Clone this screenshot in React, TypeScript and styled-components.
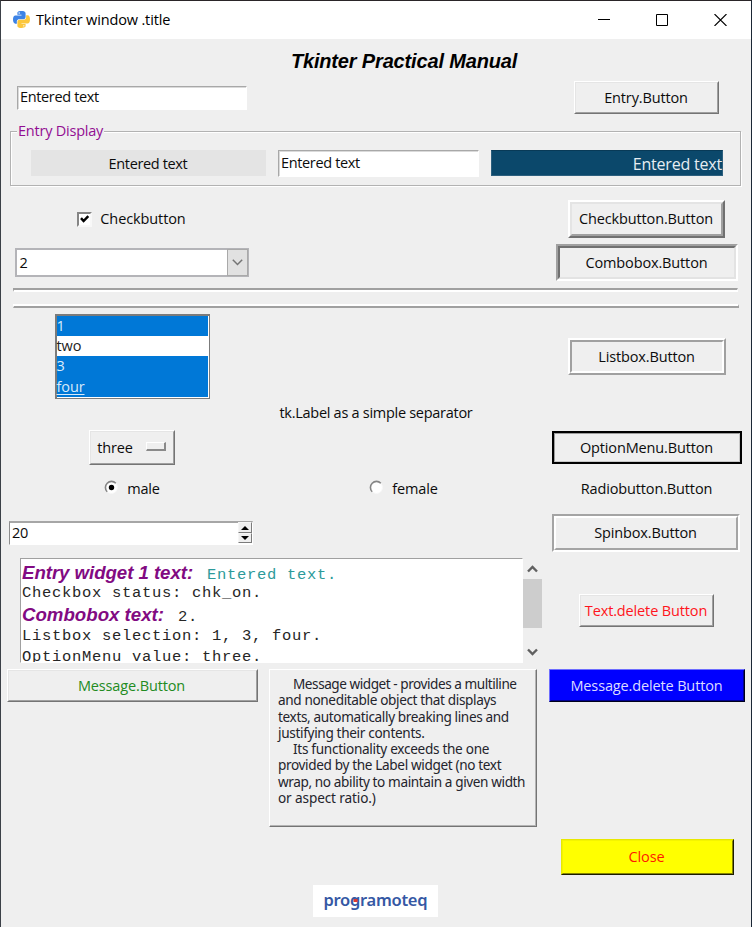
import React from 'react';
import styled, { createGlobalStyle, css } from 'styled-components';

const GlobalStyle = createGlobalStyle`
  * { box-sizing: border-box; }
  body { margin: 0; background: #efefef; }
`;

const uiFont = css`
  font-family: 'Open Sans', 'Noto Sans', sans-serif;
  font-size: 14.5px;
  line-height: 20px;
  color: #0c0c0c;
  white-space: nowrap;
`;

const Window = styled.div`
  ${uiFont}
  width: 752px;
  height: 927px;
  background: #efefef;
  border-top: 1px solid #2a2528;
  border-left: 1px solid #3b4047;
  border-right: 1px solid #1b2735;
  overflow: hidden;
`;

const TitleBar = styled.header`
  height: 38px;
  display: flex;
  align-items: center;
  background: #fff;
  padding: 0 0 1px 12px;
`;

const Text = styled.span<{ $track?: number }>`
  letter-spacing: ${(p) => p.$track ?? -0.35}px;
`;

const WindowTitle = styled.div`
  flex: 1;
  margin-left: 6px;
  letter-spacing: -0.14px;
  color: #000;
`;

const Controls = styled.div`
  display: flex;
  gap: 46px;
  padding-right: 24px;
`;

const Icon = styled.svg`
  display: block;
  flex: none;
`;

const Row = styled.div<{ $h: number; $mt?: number }>`
  display: grid;
  grid-template-columns: 262px 282px 204px;
  align-items: center;
  justify-items: center;
  height: ${(p) => p.$h}px;
  margin-top: ${(p) => p.$mt ?? 0}px;
`;

const Cell = styled.div<{ $col: number; $shift?: number }>`
  grid-column: ${(p) => p.$col};
  grid-row: 1;
  display: flex;
  align-items: center;
  margin-left: ${(p) => p.$shift ?? 0}px;
`;

const Heading = styled.h1`
  grid-column: 2;
  margin: 1px 0 0;
  font: italic bold 20px/24px 'Liberation Sans', sans-serif;
  letter-spacing: -0.16px;
  color: #000;
`;

const Entry = styled.div<{ $w: number; $h: number }>`
  width: ${(p) => p.$w}px;
  height: ${(p) => p.$h}px;
  display: flex;
  align-items: center;
  padding: 0 0 1px 2px;
  background: #fff;
  border: 1px solid #fff;
  border-top-color: #a8a8a8;
  border-left-color: #a8a8a8;
  box-shadow: inset 1px 1px 0 #dadada;
`;

const Frame = styled.fieldset`
  width: 731px;
  height: 65px;
  margin: 7px 0 0 9px;
  padding: 9px 0 0 20px;
  min-width: 0;
  display: flex;
  align-items: flex-start;
  border: 1px solid #b2b2b2;
  box-shadow: 1px 1px 0 #fff, inset 1px 1px 0 #fff;
`;

const Legend = styled.legend`
  margin-left: -14px;
  padding: 0 1px;
  height: 20px;
  background: #efefef;
  color: #920e92;
  letter-spacing: -0.22px;
`;

const GreyLabel = styled.div`
  width: 235px;
  height: 26px;
  margin-right: 12px;
  padding-right: 1px;
  text-align: center;
  line-height: 27px;
  background: #e4e4e4;
`;

const BlueLabel = styled.div`
  width: 232px;
  height: 26px;
  margin-left: 12px;
  text-align: right;
  font-size: 16px;
  line-height: 27px;
  color: #e6edf2;
  background: #0b486b;
  border: 1px solid #2c5f7e;
  border-top-color: #083a57;
`;

type Relief = 'raised' | 'thick' | 'sunken' | 'ridge' | 'groove' | 'solid' | 'flat' | 'blue' | 'yellow';

/* outer width, outer top-left, outer bottom-right, inner width, inner top-left, inner bottom-right, face */
const reliefs: Record<Relief, [number, string, string, number, string, string, string]> = {
  raised: [1, '#fff', '#747474', 1, '#e5e5e5', '#a0a0a0', '#efefef'],
  thick: [2, '#fff', '#707070', 2, '#e4e4e4', '#a0a0a0', '#efefef'],
  sunken: [2, '#a0a0a0', '#fff', 2, '#707070', '#e3e3e3', '#efefef'],
  ridge: [2, '#fff', '#a0a0a0', 2, '#a0a0a0', '#fff', '#efefef'],
  groove: [2, '#a4a4a4', '#fff', 2, '#fff', '#a4a4a4', '#efefef'],
  solid: [2, '#000', '#000', 1, '#9c9c9c', '#c8c8c8', '#efefef'],
  flat: [1, '#efefef', '#efefef', 0, '#efefef', '#efefef', '#efefef'],
  blue: [1, '#6d6dff', '#00001c', 1, '#0000ff', '#000090', '#0000ff'],
  yellow: [1, '#e8e800', '#1c1c00', 1, '#f4f400', '#858500', '#ffff00'],
};

const BevelOuter = styled.button<{ $relief: Relief; $w: number; $h: number }>`
  ${uiFont}
  display: flex;
  width: ${(p) => p.$w}px;
  height: ${(p) => p.$h}px;
  padding: 0;
  border-style: solid;
  border-width: ${(p) => reliefs[p.$relief][0]}px;
  border-color: ${(p) => {
    const [, tl, br] = reliefs[p.$relief];
    return `${tl} ${br} ${br} ${tl}`;
  }};
  background: ${(p) => reliefs[p.$relief][6]};
`;

const BevelInner = styled.span<{ $relief: Relief; $color?: string }>`
  flex: 1;
  align-self: stretch;
  display: flex;
  align-items: center;
  justify-content: center;
  padding-right: 1px;
  color: ${(p) => p.$color ?? 'inherit'};
  border-style: solid;
  border-width: ${(p) => reliefs[p.$relief][3]}px;
  border-color: ${(p) => {
    const [, , , , tl, br] = reliefs[p.$relief];
    return `${tl} ${br} ${br} ${tl}`;
  }};
`;

interface ButtonProps {
  relief: Relief;
  w: number;
  h: number;
  color?: string;
  track?: number;
  children: React.ReactNode;
}

const TkButton = ({ relief, w, h, color, track = -0.14, children }: ButtonProps) => (
  <BevelOuter type="button" $relief={relief} $w={w} $h={h}>
    <BevelInner $relief={relief} $color={color}>
      <Text $track={track}>{children}</Text>
    </BevelInner>
  </BevelOuter>
);

const CheckBox = styled.span`
  width: 15px;
  height: 15px;
  margin-right: 8px;
  background: #fff;
  border: 2px solid;
  border-color: #858585 #f8f8f8 #f8f8f8 #858585;
`;

const Combo = styled.div`
  width: 234px;
  height: 29px;
  display: flex;
  align-items: stretch;
  background: #fff;
  border: 2px solid #b4b4b8;
`;

const ComboValue = styled.div`
  flex: 1;
  padding-left: 3px;
  line-height: 25px;
`;

const ComboArrow = styled.div`
  width: 21px;
  margin: -1px;
  display: flex;
  align-items: center;
  justify-content: center;
  background: #e1e1e1;
  border: 1px solid #a9a9a9;
`;

const Separator = styled.div<{ $top: string; $bottom: string; $mt: number; $w: number; $h: number }>`
  width: ${(p) => p.$w}px;
  height: ${(p) => p.$h}px;
  margin: ${(p) => p.$mt}px 0 0 12px;
  border-style: solid;
  border-width: 2px 1px;
  border-color: ${(p) => `${p.$top} ${p.$bottom} ${p.$bottom} ${p.$top}`};
`;

const ListBox = styled.div`
  width: 155px;
  height: 85px;
  padding: 0 1px 1px 0;
  background: #fff;
  border: 2px solid #7b7b7b;
  border-width: 2px 1px 1px 2px;
`;

const ListItem = styled.div<{ $on?: boolean; $under?: boolean; $h: number }>`
  height: ${(p) => p.$h}px;
  line-height: 20px;
  letter-spacing: -0.1px;
  color: ${(p) => (p.$on ? '#d9ebfa' : '#222')};
  background: ${(p) => (p.$on ? '#0078d7' : '#fff')};
  text-decoration: ${(p) => (p.$under ? 'underline' : 'none')};
  text-underline-offset: 2px;
`;

const PlainLabel = styled.div`
  height: 20px;
  margin-top: 4px;
  text-align: center;
`;

const OptionFace = styled.span`
  display: flex;
  align-items: center;
  gap: 13px;
`;

const Indicator = styled.span`
  width: 20px;
  height: 9px;
  margin-top: -2px;
  border: 2px solid;
  border-color: #fff #8a8a8a #8a8a8a #fff;
  border-width: 1px 2px 2px 1px;
`;

const Spin = styled.div`
  width: 244px;
  height: 24px;
  display: flex;
  background: #fff;
  border: 1px solid #fff;
  border-top: 2px solid #a6a6a6;
  border-left-color: #8c8c8c;
`;

const SpinValue = styled.div`
  flex: 1;
  padding-left: 2px;
  line-height: 20px;
`;

const SpinButtons = styled.div`
  width: 14px;
  margin-top: -1px;
  display: grid;
  grid-template-rows: 11px 10px;
`;

const SpinButton = styled.div`
  display: flex;
  align-items: center;
  justify-content: center;
  background: #efefef;
  border: 1px solid;
  border-color: #f6f6f6 #7b7b7b #7b7b7b #f6f6f6;
`;

const OutputRow = styled.div`
  display: flex;
  align-items: flex-start;
  height: 105px;
  margin-top: 6px;
  padding-left: 19px;
`;

const Output = styled.div`
  width: 503px;
  height: 105px;
  padding: 3px 0 0 1px;
  overflow: hidden;
  background: #fff;
  border: 1px solid #fff;
  border-top-color: #a0a0a0;
  border-left-color: #a0a0a0;
`;

const OutputLine = styled.div<{ $h: number }>`
  height: ${(p) => p.$h}px;
  line-height: 21px;
  white-space: pre;
  font-family: 'Liberation Mono', monospace;
  font-size: 15.5px;
  letter-spacing: 0.7px;
  color: #262626;
`;

const Tag = styled.span<{ $track: number }>`
  margin-right: 4px;
  font: italic bold 18.67px/21px 'Liberation Sans', sans-serif;
  letter-spacing: ${(p) => p.$track}px;
  color: #820a82;
`;

const Teal = styled.span`
  color: #2d9a9a;
`;

const Scrollbar = styled.div`
  width: 19px;
  height: 105px;
  display: flex;
  flex-direction: column;
  align-items: center;
  padding: 7px 0;
  background: #efefef;
`;

const Thumb = styled.div`
  width: 19px;
  height: 50px;
  margin: 6px 0 20px;
  background: #cdcdcd;
`;

const DeleteCell = styled.div`
  margin: 36px 0 0 37px;
`;

const MessageRow = styled.div`
  display: grid;
  grid-template-columns: 262px 282px 204px;
  align-items: start;
  justify-items: center;
  margin-top: 6px;
  height: 158px;
`;

const Message = styled.div`
  width: 268px;
  height: 158px;
  margin-right: 2px;
  padding: 6px 0 0 8px;
  font-family: 'Noto Sans', sans-serif;
  font-size: 13.6px;
  line-height: 16.25px;
  color: #24242c;
  white-space: pre;
  border: 1px solid;
  border-color: #fff #747474 #747474 #fff;
  box-shadow: inset -1px -1px 0 #b4b4b4;
`;

const MessageLine = styled.div<{ $track: number; $indent?: boolean }>`
  letter-spacing: ${(p) => p.$track}px;
  padding-left: ${(p) => (p.$indent ? 15 : 0)}px;
`;

const LogoPlate = styled.div`
  width: 125px;
  height: 32px;
  margin: 10px 0 0 312px;
  background: #fff;
`;

const PythonIcon = () => (
  <Icon width="17" height="17" viewBox="0 0 256 255">
    <path fill="#3d83e6" d="M126.916.072c-64.832 0-60.784 28.115-60.784 28.115l.072 29.128h61.868v8.745H41.631S.145 61.355.145 126.77c0 65.417 36.21 63.097 36.21 63.097h21.61v-30.356s-1.165-36.21 35.632-36.21h61.362s34.475.557 34.475-33.319V33.97S194.67.072 126.916.072zM92.802 19.66a11.12 11.12 0 0 1 11.13 11.13 11.12 11.12 0 0 1-11.13 11.13 11.12 11.12 0 0 1-11.13-11.13 11.12 11.12 0 0 1 11.13-11.13z" />
    <path fill="#fcc73c" d="M128.757 254.126c64.832 0 60.784-28.115 60.784-28.115l-.072-29.127H127.6v-8.745h86.441s41.486 4.705 41.486-60.712c0-65.416-36.21-63.096-36.21-63.096h-21.61v30.355s1.165 36.21-35.632 36.21h-61.362s-34.475-.557-34.475 33.32v56.013s-5.235 33.897 62.518 33.897zm34.114-19.586a11.12 11.12 0 0 1-11.13-11.13 11.12 11.12 0 0 1 11.13-11.131 11.12 11.12 0 0 1 11.13 11.13 11.12 11.12 0 0 1-11.13 11.13z" />
  </Icon>
);

const RadioMark = styled(Icon)`
  margin: -3px 8px 0 0;
`;

const Radio = ({ on }: { on?: boolean }) => (
  <RadioMark width="15" height="15" viewBox="0 0 15 15">
    <circle cx="7.5" cy="7.5" r="6" fill="#fff" stroke="#f8f8f8" strokeWidth="1" />
    <path d="M3.2 11.8A6 6 0 0 1 11.8 3.2" fill="none" stroke="#858585" strokeWidth="1.6" />
    {on && <circle cx="7.5" cy="7.5" r="2.7" fill="#000" />}
  </RadioMark>
);

const Chevron = ({ down }: { down?: boolean }) => (
  <Icon width="11" height="8" viewBox="0 0 11 8">
    <path d={down ? 'M1 1.5 5.5 6 10 1.5' : 'M1 6.5 5.5 2 10 6.5'} fill="none" stroke="#606060" strokeWidth="2.4" />
  </Icon>
);

const App = () => (
  <>
    <GlobalStyle />
    <Window>
      <TitleBar>
        <PythonIcon />
        <WindowTitle>Tkinter window .title</WindowTitle>
        <Controls>
          <Icon width="12" height="12" viewBox="0 0 12 12"><path d="M0 5.5H12" stroke="#000" /></Icon>
          <Icon width="12" height="12" viewBox="0 0 12 12"><path d="M.5.5H11.5V11.5H.5Z" fill="none" stroke="#000" /></Icon>
          <Icon width="13" height="12" viewBox="0 0 13 12"><path d="M.5 0 12.5 12M12.5 0 .5 12" stroke="#000" strokeWidth="1.1" /></Icon>
        </Controls>
      </TitleBar>

      <Row $h={42}><Heading>Tkinter Practical Manual</Heading></Row>

      <Row $h={33}>
        <Cell $col={1}><Entry $w={230} $h={24}><Text>Entered text</Text></Entry></Cell>
        <Cell $col={3} $shift={-1}><TkButton relief="raised" w={145} h={33}>Entry.Button</TkButton></Cell>
      </Row>

      <Frame>
        <Legend>Entry Display</Legend>
        <GreyLabel><Text>Entered text</Text></GreyLabel>
        <Entry $w={201} $h={27}><Text>Entered text</Text></Entry>
        <BlueLabel><Text $track={-0.2}>Entered text</Text></BlueLabel>
      </Frame>

      <Row $h={38} $mt={14}>
        <Cell $col={1} $shift={-1}>
          <CheckBox>
            <Icon width="11" height="11" viewBox="0 0 11 11"><path d="M2 4.2 4.6 7 9.3 2.2" fill="none" stroke="#000" strokeWidth="2.5" /></Icon>
          </CheckBox>
          <Text $track={-0.1}>Checkbutton</Text>
        </Cell>
        <Cell $col={3} $shift={-1}><TkButton relief="thick" w={157} h={38}>Checkbutton.Button</TkButton></Cell>
      </Row>

      <Row $h={37} $mt={6}>
        <Cell $col={1} $shift={-1}>
          <Combo>
            <ComboValue>2</ComboValue>
            <ComboArrow>
              <Icon width="11" height="7" viewBox="0 0 11 7"><path d="M.8.8 5.5 5.5 10.2.8" fill="none" stroke="#747474" strokeWidth="1.5" /></Icon>
            </ComboArrow>
          </Combo>
        </Cell>
        <Cell $col={3}><TkButton relief="sunken" w={182} h={37}>Combobox.Button</TkButton></Cell>
      </Row>

      <Separator $top="#a0a0a0" $bottom="#fff" $mt={7} $w={725} $h={4} />
      <Separator $top="#fff" $bottom="#a0a0a0" $mt={12} $w={726} $h={4} />

      <Row $h={85} $mt={6}>
        <Cell $col={1}>
          <ListBox>
            <ListItem $on $h={20}>1</ListItem>
            <ListItem $h={20}>two</ListItem>
            <ListItem $on $h={21}>3</ListItem>
            <ListItem $on $under $h={20}>four</ListItem>
          </ListBox>
        </Cell>
        <Cell $col={3}><TkButton relief="ridge" w={158} h={37}>Listbox.Button</TkButton></Cell>
      </Row>

      <PlainLabel><Text $track={-0.28}>tk.Label as a simple separator</Text></PlainLabel>

      <Row $h={35} $mt={7}>
        <Cell $col={1}>
          <TkButton relief="raised" w={86} h={35}>
            <OptionFace>three<Indicator /></OptionFace>
          </TkButton>
        </Cell>
        <Cell $col={3}><TkButton relief="solid" w={190} h={33}>OptionMenu.Button</TkButton></Cell>
      </Row>

      <Row $h={48}>
        <Cell $col={1}><Radio on /><Text $track={-0.25}>male</Text></Cell>
        <Cell $col={2} $shift={-1}><Radio /><Text $track={-0.1}>female</Text></Cell>
        <Cell $col={3}><TkButton relief="flat" w={150} h={32}>Radiobutton.Button</TkButton></Cell>
      </Row>

      <Row $h={38} $mt={1}>
        <Cell $col={1} $shift={-2}>
          <Spin>
            <SpinValue><Text>20</Text></SpinValue>
            <SpinButtons>
              <SpinButton><Icon width="8" height="4" viewBox="0 0 8 4"><path d="M4 0 8 4H0Z" /></Icon></SpinButton>
              <SpinButton><Icon width="8" height="4" viewBox="0 0 8 4"><path d="M0 0H8L4 4Z" /></Icon></SpinButton>
            </SpinButtons>
          </Spin>
        </Cell>
        <Cell $col={3} $shift={-2}><TkButton relief="groove" w={188} h={38}>Spinbox.Button</TkButton></Cell>
      </Row>

      <OutputRow>
        <Output>
          <OutputLine $h={21}><Tag $track={-0.05}>Entry widget 1 text:</Tag><Teal> Entered text.</Teal></OutputLine>
          <OutputLine $h={21}>Checkbox status: chk_on.</OutputLine>
          <OutputLine $h={22}><Tag $track={0}>Combobox text:</Tag> 2.</OutputLine>
          <OutputLine $h={21}>Listbox selection: 1, 3, four.</OutputLine>
          <OutputLine $h={21}>OptionMenu value: three.</OutputLine>
        </Output>
        <Scrollbar><Chevron /><Thumb /><Chevron down /></Scrollbar>
        <DeleteCell><TkButton relief="raised" w={135} h={33} color="#ff1420">Text.delete Button</TkButton></DeleteCell>
      </OutputRow>

      <MessageRow>
        <TkButton relief="raised" w={251} h={33} color="#228b22">Message.Button</TkButton>
        <Message>
          <MessageLine $track={-0.46} $indent>Message widget - provides a multiline</MessageLine>
          <MessageLine $track={-0.37}>and noneditable object that displays</MessageLine>
          <MessageLine $track={-0.37}>texts, automatically breaking lines and</MessageLine>
          <MessageLine $track={-0.33}>justifying their contents.</MessageLine>
          <MessageLine $track={-0.3} $indent>Its functionality exceeds the one</MessageLine>
          <MessageLine $track={-0.36}>provided by the Label widget (no text</MessageLine>
          <MessageLine $track={-0.39}>wrap, no ability to maintain a given width</MessageLine>
          <MessageLine $track={-0.12}>or aspect ratio.)</MessageLine>
        </Message>
        <TkButton relief="blue" w={196} h={33} color="#dcdcff">Message.delete Button</TkButton>
      </MessageRow>

      <Row $h={36} $mt={12}>
        <Cell $col={3}><TkButton relief="yellow" w={173} h={36} color="#ff1a00">Close</TkButton></Cell>
      </Row>

      <LogoPlate>
        <Icon width="125" height="32" viewBox="0 0 125 32">
          <text x="10.5" y="21" textLength="104" fontFamily="'Noto Sans', sans-serif" fontSize="16.5" fontWeight="600" fill="#3558a4">programoteq</text>
          <rect x="40.5" y="14" width="4" height="3" fill="#e23a2e" />
        </Icon>
      </LogoPlate>
    </Window>
  </>
);

export default App;
